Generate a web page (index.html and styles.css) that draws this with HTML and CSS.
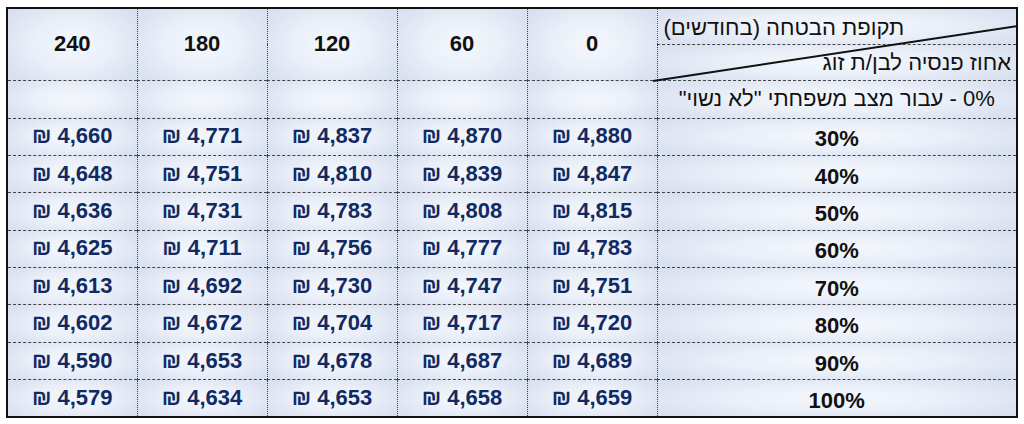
FILE: index.html
```html
<!DOCTYPE html>
<html lang="he">
<head>
<meta charset="utf-8">
<title>טבלת פנסיה</title>
<link rel="stylesheet" href="styles.css">
</head>
<body>
<table class="grid" dir="rtl">
  <colgroup>
    <col class="c-label"><col class="c-val"><col class="c-val"><col class="c-val"><col class="c-val"><col class="c-val">
  </colgroup>
  <tr class="h1">
    <td class="corner-top">
      <svg class="diag" viewBox="0 0 365 56" preserveAspectRatio="none" aria-hidden="true"><line x1="365" y1="1" x2="0" y2="56" stroke="#111" stroke-width="2"/></svg>
      <span>תקופת הבטחה (בחודשים)</span>
    </td>
    <th rowspan="2">0</th>
    <th rowspan="2">60</th>
    <th rowspan="2">120</th>
    <th rowspan="2">180</th>
    <th rowspan="2">240</th>
  </tr>
  <tr class="h2">
    <td class="corner-bot">אחוז פנסיה לבן/ת זוג</td>
  </tr>
  <tr class="r0">
    <td class="lbl-text">0% - עבור מצב משפחתי "לא נשוי"</td>
    <td></td><td></td><td></td><td></td><td></td>
  </tr>
  <tr><td class="pct">30%</td><td class="v" dir="ltr">₪ 4,880</td><td class="v" dir="ltr">₪ 4,870</td><td class="v" dir="ltr">₪ 4,837</td><td class="v" dir="ltr">₪ 4,771</td><td class="v" dir="ltr">₪ 4,660</td></tr>
  <tr><td class="pct">40%</td><td class="v" dir="ltr">₪ 4,847</td><td class="v" dir="ltr">₪ 4,839</td><td class="v" dir="ltr">₪ 4,810</td><td class="v" dir="ltr">₪ 4,751</td><td class="v" dir="ltr">₪ 4,648</td></tr>
  <tr><td class="pct">50%</td><td class="v" dir="ltr">₪ 4,815</td><td class="v" dir="ltr">₪ 4,808</td><td class="v" dir="ltr">₪ 4,783</td><td class="v" dir="ltr">₪ 4,731</td><td class="v" dir="ltr">₪ 4,636</td></tr>
  <tr><td class="pct">60%</td><td class="v" dir="ltr">₪ 4,783</td><td class="v" dir="ltr">₪ 4,777</td><td class="v" dir="ltr">₪ 4,756</td><td class="v" dir="ltr">₪ 4,711</td><td class="v" dir="ltr">₪ 4,625</td></tr>
  <tr><td class="pct">70%</td><td class="v" dir="ltr">₪ 4,751</td><td class="v" dir="ltr">₪ 4,747</td><td class="v" dir="ltr">₪ 4,730</td><td class="v" dir="ltr">₪ 4,692</td><td class="v" dir="ltr">₪ 4,613</td></tr>
  <tr><td class="pct">80%</td><td class="v" dir="ltr">₪ 4,720</td><td class="v" dir="ltr">₪ 4,717</td><td class="v" dir="ltr">₪ 4,704</td><td class="v" dir="ltr">₪ 4,672</td><td class="v" dir="ltr">₪ 4,602</td></tr>
  <tr><td class="pct">90%</td><td class="v" dir="ltr">₪ 4,689</td><td class="v" dir="ltr">₪ 4,687</td><td class="v" dir="ltr">₪ 4,678</td><td class="v" dir="ltr">₪ 4,653</td><td class="v" dir="ltr">₪ 4,590</td></tr>
  <tr><td class="pct">100%</td><td class="v" dir="ltr">₪ 4,659</td><td class="v" dir="ltr">₪ 4,658</td><td class="v" dir="ltr">₪ 4,653</td><td class="v" dir="ltr">₪ 4,634</td><td class="v" dir="ltr">₪ 4,579</td></tr>
</table>
</body>
</html>
```

FILE: styles.css
```css
html, body {
  margin: 0;
  padding: 0;
  background: #fff;
}
body {
  padding: 7px 0 0 6px;
  font-family: "Liberation Sans", Arial, sans-serif;
}
.grid {
  border-collapse: collapse;
  table-layout: fixed;
  width: 1012px;
  border: 2px solid #111;
}
.c-label { width: 360px; }
.c-val { width: 130px; }
.grid td, .grid th {
  padding: 0;
  border-top: 1px dashed #444;
  border-bottom: 1px dashed #444;
  border-left: 1px dotted #444;
  border-right: 1px dotted #444;
  background: radial-gradient(ellipse 60% 70% at 50% 50%, #f4f7fc 0%, #eaeff8 50%, #d9e0ef 100%);
  text-align: center;
  vertical-align: middle;
  height: 37.4px;
  box-sizing: border-box;
}
.grid th {
  font-size: 22px;
  font-weight: bold;
  color: #111;
}
.h1 td, .h2 td { height: 36px; }
.corner-top {
  position: relative;
  text-align: left !important;
  font-size: 22px;
  color: #111;
  padding: 6px 0 0 6px !important;
  vertical-align: top !important;
  border-bottom: 1px dashed #444;
}
.corner-bot {
  text-align: right !important;
  font-size: 22px;
  color: #111;
  padding: 2px 5px 0 0 !important;
}
.diag {
  position: absolute;
  left: -5px;
  top: 16px;
  width: 365px;
  height: 56px;
  overflow: visible;
  pointer-events: none;
}
.r0 td { height: 38px; }
.lbl-text {
  font-size: 22px;
  color: #111;
}
.pct {
  font-size: 22px;
  font-weight: bold;
  color: #111;
  padding-top: 5px !important;
}
.v {
  font-size: 22px;
  font-weight: bold;
  color: #112a64;
  padding-bottom: 1px !important;
}
```
